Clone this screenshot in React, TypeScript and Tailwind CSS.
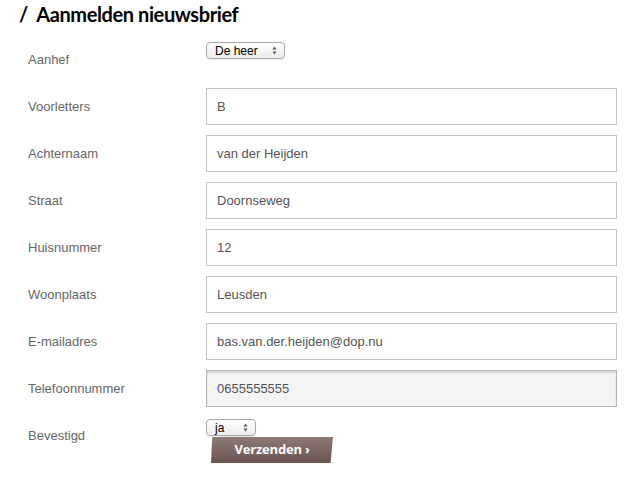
import React from 'react';

const fields = [
  { label: 'Voorletters', value: 'B' },
  { label: 'Achternaam', value: 'van der Heijden' },
  { label: 'Straat', value: 'Doornseweg' },
  { label: 'Huisnummer', value: '12' },
  { label: 'Woonplaats', value: 'Leusden' },
  { label: 'E-mailadres', value: 'bas.van.der.heijden@dop.nu' },
  { label: 'Telefoonnummer', value: '0655555555', active: true },
];

const Arrows = () => (
  <svg width="5" height="9" viewBox="0 0 5 9" className="text-gray-600">
    <path d="M2.5 0.5 L4.5 3.5 L0.5 3.5 Z" fill="currentColor" />
    <path d="M2.5 8.5 L4.5 5.5 L0.5 5.5 Z" fill="currentColor" />
  </svg>
);

const FakeSelect: React.FC<{ value: string; width: string }> = ({ value, width }) => (
  <div
    className={`${width} h-[17px] flex items-center justify-between pl-[8px] pr-[7px] rounded-[4px] border border-[#a9a9a9] bg-gradient-to-b from-white to-[#ececec] shadow-[0_1px_1px_rgba(0,0,0,0.08)] text-[12px] leading-none text-black`}
  >
    <span>{value}</span>
    <Arrows />
  </div>
);

const Label: React.FC<{ children: React.ReactNode }> = ({ children }) => (
  <div className="h-[37px] flex items-center text-[13px] text-[#666]">{children}</div>
);

export default function App() {
  return (
    <div className="w-[644px] h-[477px] bg-white overflow-hidden font-['Liberation_Sans',Arial,sans-serif]">
      <h1 className="pl-[19px] pt-[1px] h-[30px] text-[20px] leading-[26px] font-bold tracking-[-0.4px] text-black font-['Lato',sans-serif] whitespace-pre">
        /  Aanmelden nieuwsbrief
      </h1>

      <div className="grid grid-cols-[178px_411px] gap-y-[10px] pl-[28px] pt-[11px]">
        <Label>Aanhef</Label>
        <div className="pt-[1px]">
          <FakeSelect value="De heer" width="w-[79px]" />
        </div>

        {fields.map((f) => (
          <React.Fragment key={f.label}>
            <Label>{f.label}</Label>
            <div
              className={`h-[37px] flex items-center px-[10px] border text-[13px] text-[#555] ${
                f.active
                  ? 'bg-[#f4f4f4] border-[#b5b5b5] shadow-[inset_0_2px_2px_rgba(0,0,0,0.12)]'
                  : 'bg-white border-[#c4c4c4]'
              }`}
            >
              {f.value}
            </div>
          </React.Fragment>
        ))}

        <Label>Bevestigd</Label>
        <div className="pt-[2px]">
          <FakeSelect value="ja" width="w-[50px]" />
          <button className="mt-[1px] ml-[5px] w-[122px] h-[26px] flex items-center justify-center text-white font-bold text-[13px] tracking-[-0.2px] font-['Open_Sans',sans-serif] bg-gradient-to-b from-[#8e7a76] to-[#6b5350] shadow-[2px_2px_2px_rgba(0,0,0,0.3)] [clip-path:polygon(1%_0,100%_0,98%_100%,0_100%)]">
            Verzenden ›
          </button>
        </div>
      </div>
    </div>
  );
}
